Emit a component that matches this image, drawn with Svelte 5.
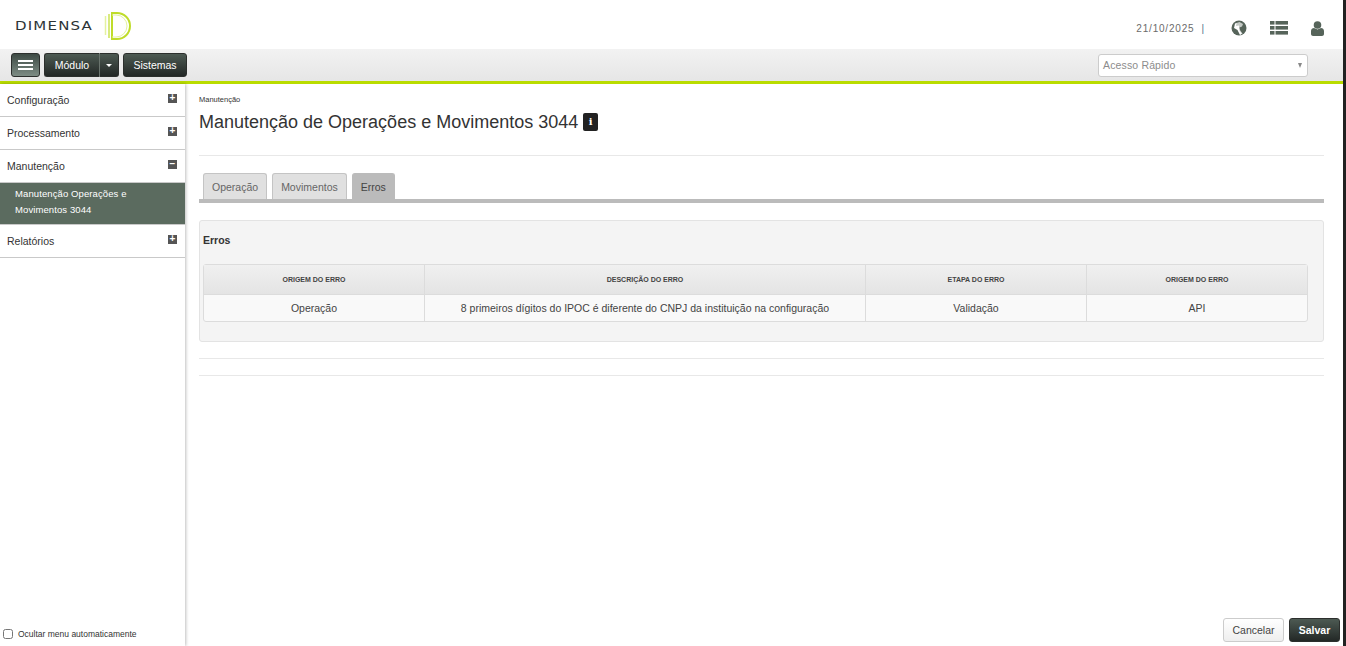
<script>
	const menu = [
		{ label: 'Configuração', open: false },
		{ label: 'Processamento', open: false },
		{ label: 'Manutenção', open: true, sub: 'Manutenção Operações e Movimentos 3044' },
		{ label: 'Relatórios', open: false }
	];
	const tabs = ['Operação', 'Movimentos', 'Erros'];
	const columns = ['Origem do erro', 'Descrição do erro', 'Etapa do erro', 'Origem do erro'];
	const row = [
		'Operação',
		'8 primeiros dígitos do IPOC é diferente do CNPJ da instituição na configuração',
		'Validação',
		'API'
	];
</script>

<div class="page">
	<header class="top">
		<div class="logo">
			<span class="logo-name">DIMENSA</span>
			<svg width="32" height="30" viewBox="0 0 32 30" fill="none">
				<path d="M1.5 5v19" stroke="#e4f2a0" stroke-width="1.5" />
				<path d="M5 3v24" stroke="#bfdc2a" stroke-width="1.2" />
				<path d="M8 2h5a13 13 0 0 1 0 26H8z" stroke="#bfdc2a" stroke-width="2" />
				<path d="M8 4h4a11 11 0 0 1 0 22H8" stroke="#e4f2a0" stroke-width="1" />
			</svg>
		</div>
		<div class="top-right">
			<span class="date">21/10/2025</span>
			<span class="sep">|</span>
			<svg class="globe" width="16" height="16" viewBox="0 0 16 16">
				<circle cx="8" cy="8" r="7.5" fill="#56645a" />
				<path d="M4 3.5 8.5 2l3.5 2-1 2.5-2.5 1L9 10l2.500 3.500L9 15 6.500 10 3 8z" fill="#fff" />
				<path d="M5 6l3-.5.500 5L11 14l3-4-1-6-4-3H6z" fill="#56645a" opacity=".35" />
			</svg>
			<svg class="list" width="18" height="14" viewBox="0 0 18 14" fill="#56645a">
				<rect x="0" y="0" width="4.500" height="3.600" /><rect x="5.500" y="0" width="12.500" height="3.600" />
				<rect x="0" y="5" width="4.500" height="3.600" /><rect x="5.500" y="5" width="12.500" height="3.600" />
				<rect x="0" y="10" width="4.500" height="3.600" /><rect x="5.500" y="10" width="12.500" height="3.600" />
			</svg>
			<svg class="user" width="13" height="15" viewBox="0 0 13 15" fill="#56645a">
				<circle cx="6.500" cy="4" r="3.800" />
				<path d="M0 13V10c0-2 1.500-3 3-3l3.500 1.500L10 7c1.500 0 3 1 3 3v3c0 1-1 2-2 2H2c-1 0-2-1-2-2z" />
			</svg>
		</div>
	</header>

	<div class="toolbar">
		<div class="tool-left">
			<button class="btn burger" aria-label="Menu"><i></i><i></i><i></i></button>
			<div class="split">
				<button class="btn modulo">Módulo</button>
				<button class="btn caret-btn" aria-label="Abrir"><span class="caret"></span></button>
			</div>
			<button class="btn sistemas">Sistemas</button>
		</div>
		<div class="quick">
			<span>Acesso Rápido</span>
			<span class="quick-arrow"></span>
		</div>
	</div>

	<div class="body">
		<aside class="side">
			<nav>
				{#each menu as item}
					<div class="item">
						<span>{item.label}</span>
						<span class="box">{item.open ? '−' : '+'}</span>
					</div>
					{#if item.sub}
						<div class="sub">{item.sub}</div>
					{/if}
				{/each}
			</nav>
			<label class="hide-menu">
				<input type="checkbox" />
				<span>Ocultar menu automaticamente</span>
			</label>
		</aside>

		<main class="main">
			<div class="crumb">Manutenção</div>
			<h1>Manutenção de Operações e Movimentos 3044 <span class="info">i</span></h1>
			<hr class="first" />
			<div class="tabs">
				{#each tabs as tab, i}
					<div class="tab" class:active={i === 2}>{tab}</div>
				{/each}
			</div>
			<section class="panel">
				<h2>Erros</h2>
				<table>
					<thead>
						<tr>
							{#each columns as col}
								<th>{col}</th>
							{/each}
						</tr>
					</thead>
					<tbody>
						<tr>
							{#each row as cell}
								<td>{cell}</td>
							{/each}
						</tr>
					</tbody>
				</table>
			</section>
			<hr class="second" />
			<hr class="third" />
			<div class="actions">
				<button class="cancel">Cancelar</button>
				<button class="btn save">Salvar</button>
			</div>
		</main>
	</div>
</div>

<style>
	:global(body) {
		margin: 0;
		font-family: 'Liberation Sans', Arial, sans-serif;
		background: #fff;
	}
	.page {
		width: 1343px;
		height: 646px;
		border-right: 3px solid #222;
		display: flex;
		flex-direction: column;
		overflow: hidden;
		color: #333;
	}
	.top {
		height: 49px;
		flex: none;
		display: flex;
		justify-content: space-between;
		align-items: center;
		padding: 0 19px 0 15px;
	}
	.logo {
		display: flex;
		align-items: center;
		gap: 11px;
		padding-top: 3px;
	}
	.logo-name {
		font-family: 'DejaVu Sans', sans-serif;
		font-size: 15px;
		letter-spacing: 1.2px;
		color: #2d3436;
		transform: scaleY(0.82);
		font-weight: 400;
	}
	.top-right {
		display: flex;
		align-items: center;
		color: #666;
		font-size: 10px;
		padding-top: 7px;
	}
	.date {
		letter-spacing: 0.8px;
		color: #6b6b6b;
	}
	.sep {
		margin-left: 7px;
		margin-right: 27px;
		color: #56748a;
	}
	.list {
		margin-left: 23px;
	}
	.user {
		margin-left: 23px;
	}
	.toolbar {
		height: 32px;
		flex: none;
		background: linear-gradient(#f2f2f2, #e6e6e6);
		border-bottom: 3px solid #b9dc00;
		display: flex;
		justify-content: space-between;
		align-items: center;
		padding: 0 35px 0 11px;
	}
	.tool-left {
		display: flex;
		gap: 4px;
	}
	.btn {
		height: 24px;
		border: 1px solid #2c2f2d;
		border-radius: 3px;
		background: linear-gradient(#4d5a53, #232826);
		color: #fff;
		font: 10.500px 'Liberation Sans', Arial, sans-serif;
		padding: 0;
		box-sizing: border-box;
	}
	.burger {
		width: 29px;
		background: linear-gradient(#3d4a44, #7d8c84);
		display: flex;
		flex-direction: column;
		gap: 2px;
		align-items: center;
		justify-content: center;
	}
	.burger i {
		display: block;
		width: 15px;
		height: 2px;
		background: #fff;
	}
	.split {
		display: flex;
	}
	.modulo {
		width: 56px;
		border-radius: 3px 0 0 3px;
		border-right-color: #6a746e;
	}
	.caret-btn {
		width: 19px;
		border-left: none;
		border-radius: 0 3px 3px 0;
		display: flex;
		align-items: center;
		justify-content: center;
	}
	.caret {
		border-left: 3px solid transparent;
		border-right: 3px solid transparent;
		border-top: 3px solid #fff;
	}
	.sistemas {
		width: 64px;
	}
	.quick {
		width: 210px;
		height: 23px;
		box-sizing: border-box;
		background: #fff;
		border: 1px solid #ccc;
		border-radius: 3px;
		display: flex;
		justify-content: space-between;
		align-items: center;
		padding: 0 4px;
		color: #8c8c8c;
		font-size: 10.500px;
		letter-spacing: 0.15px;
	}
	.quick-arrow {
		border-left: 2.500px solid transparent;
		border-right: 2.500px solid transparent;
		border-top: 5px solid #888;
		margin-right: 1px;
	}
	.body {
		flex: 1;
		display: flex;
		min-height: 0;
	}
	.side {
		width: 185px;
		flex: none;
		display: flex;
		flex-direction: column;
		justify-content: space-between;
		box-shadow: 1px 0 3px rgba(0, 0, 0, 0.25);
		background: #fff;
	}
	.item {
		height: 32px;
		border-bottom: 1px solid #c9c9c9;
		display: flex;
		justify-content: space-between;
		align-items: center;
		padding: 0 8px 0 7px;
		font-size: 10.500px;
		color: #333;
	}
	.box {
		width: 9px;
		height: 9px;
		background: #555;
		color: #fff;
		font-size: 10px;
		font-weight: bold;
		line-height: 8px;
		text-align: center;
		margin-bottom: 4px;
	}
	.sub {
		background: #5b6b5f;
		color: #fff;
		font-size: 9.500px;
		line-height: 16px;
		padding: 3px 4px 6px 15px;
		border-bottom: 1px solid #c9c9c9;
		margin-top: -1px;
		border-top: 1px solid #c9c9c9;
		letter-spacing: 0.1px;
	}
	.hide-menu {
		display: flex;
		align-items: center;
		gap: 5px;
		padding: 0 0 7px 3px;
		font-size: 8.500px;
		color: #333;
	}
	.hide-menu input {
		width: 10px;
		height: 10px;
		margin: 0;
	}
	.main {
		flex: 1;
		padding: 0 19px 0 14px;
		position: relative;
		min-width: 0;
	}
	.crumb {
		font-size: 7.500px;
		margin-top: 11px;
		line-height: 10px;
		color: #333;
	}
	h1 {
		font-size: 18px;
		font-weight: 400;
		line-height: 24px;
		margin: 5px 0 0;
		color: #333;
		display: flex;
		align-items: center;
		gap: 5px;
	}
	.info {
		width: 15px;
		height: 18px;
		background: #222;
		border-radius: 2px;
		color: #fff;
		font-size: 10px;
		font-weight: bold;
		line-height: 18px;
		text-align: center;
		font-family: 'DejaVu Serif', serif;
	}
	hr {
		border: none;
		border-top: 1px solid #e8e8e8;
		margin: 0;
	}
	.first {
		margin-top: 21px;
	}
	.tabs {
		display: flex;
		gap: 5px;
		padding-left: 4px;
		margin-top: 17px;
		height: 26px;
		border-bottom: 4px solid #bbb;
	}
	.tab {
		height: 26px;
		box-sizing: border-box;
		padding: 0 8px;
		line-height: 26px;
		background: #e0e0e0;
		border: 1px solid #c4c4c4;
		border-bottom: none;
		border-radius: 3px 3px 0 0;
		font-size: 10.500px;
		color: #666;
	}
	.tab.active {
		background: #bbb;
		border-color: #bbb;
		color: #444;
	}
	.panel {
		margin-top: 17px;
		height: 122px;
		box-sizing: border-box;
		background: #f4f4f4;
		border: 1px solid #e3e3e3;
		border-radius: 3px;
		padding: 0 15px 0 3px;
	}
	h2 {
		font-size: 10.500px;
		margin: 0;
		padding-top: 13px;
		height: 43px;
		box-sizing: border-box;
		color: #333;
		font-weight: bold;
	}
	table {
		width: 100%;
		border-collapse: separate;
		border-spacing: 0;
		table-layout: fixed;
		border: 1px solid #dcdcdc;
		border-radius: 3px;
		background: #f9f9f9;
	}
	th {
		height: 29px;
		padding: 0;
		background: linear-gradient(#f0f0f0, #e4e4e4);
		border-bottom: 1px solid #dcdcdc;
		font-size: 7px;
		text-transform: uppercase;
		color: #444;
		border-left: 1px solid #dcdcdc;
	}
	td {
		height: 26px;
		padding: 0;
		text-align: center;
		font-size: 10.500px;
		color: #444;
		border-left: 1px solid #dcdcdc;
	}
	th:first-child,
	td:first-child {
		border-left: none;
	}
	th:nth-child(1),
	th:nth-child(3),
	th:nth-child(4) {
		width: 20%;
	}
	th:nth-child(2) {
		width: 40%;
	}
	.second {
		margin-top: 16px;
	}
	.third {
		margin-top: 16px;
	}
	.actions {
		position: absolute;
		right: 3px;
		bottom: 4px;
		display: flex;
		gap: 5px;
	}
	.cancel {
		width: 61px;
		height: 24px;
		background: linear-gradient(#fff, #eee);
		border: 1px solid #ccc;
		border-radius: 3px;
		font: 10.500px 'Liberation Sans', Arial, sans-serif;
		color: #444;
		padding: 0;
	}
	.save {
		width: 51px;
		font-weight: bold;
	}
</style>
